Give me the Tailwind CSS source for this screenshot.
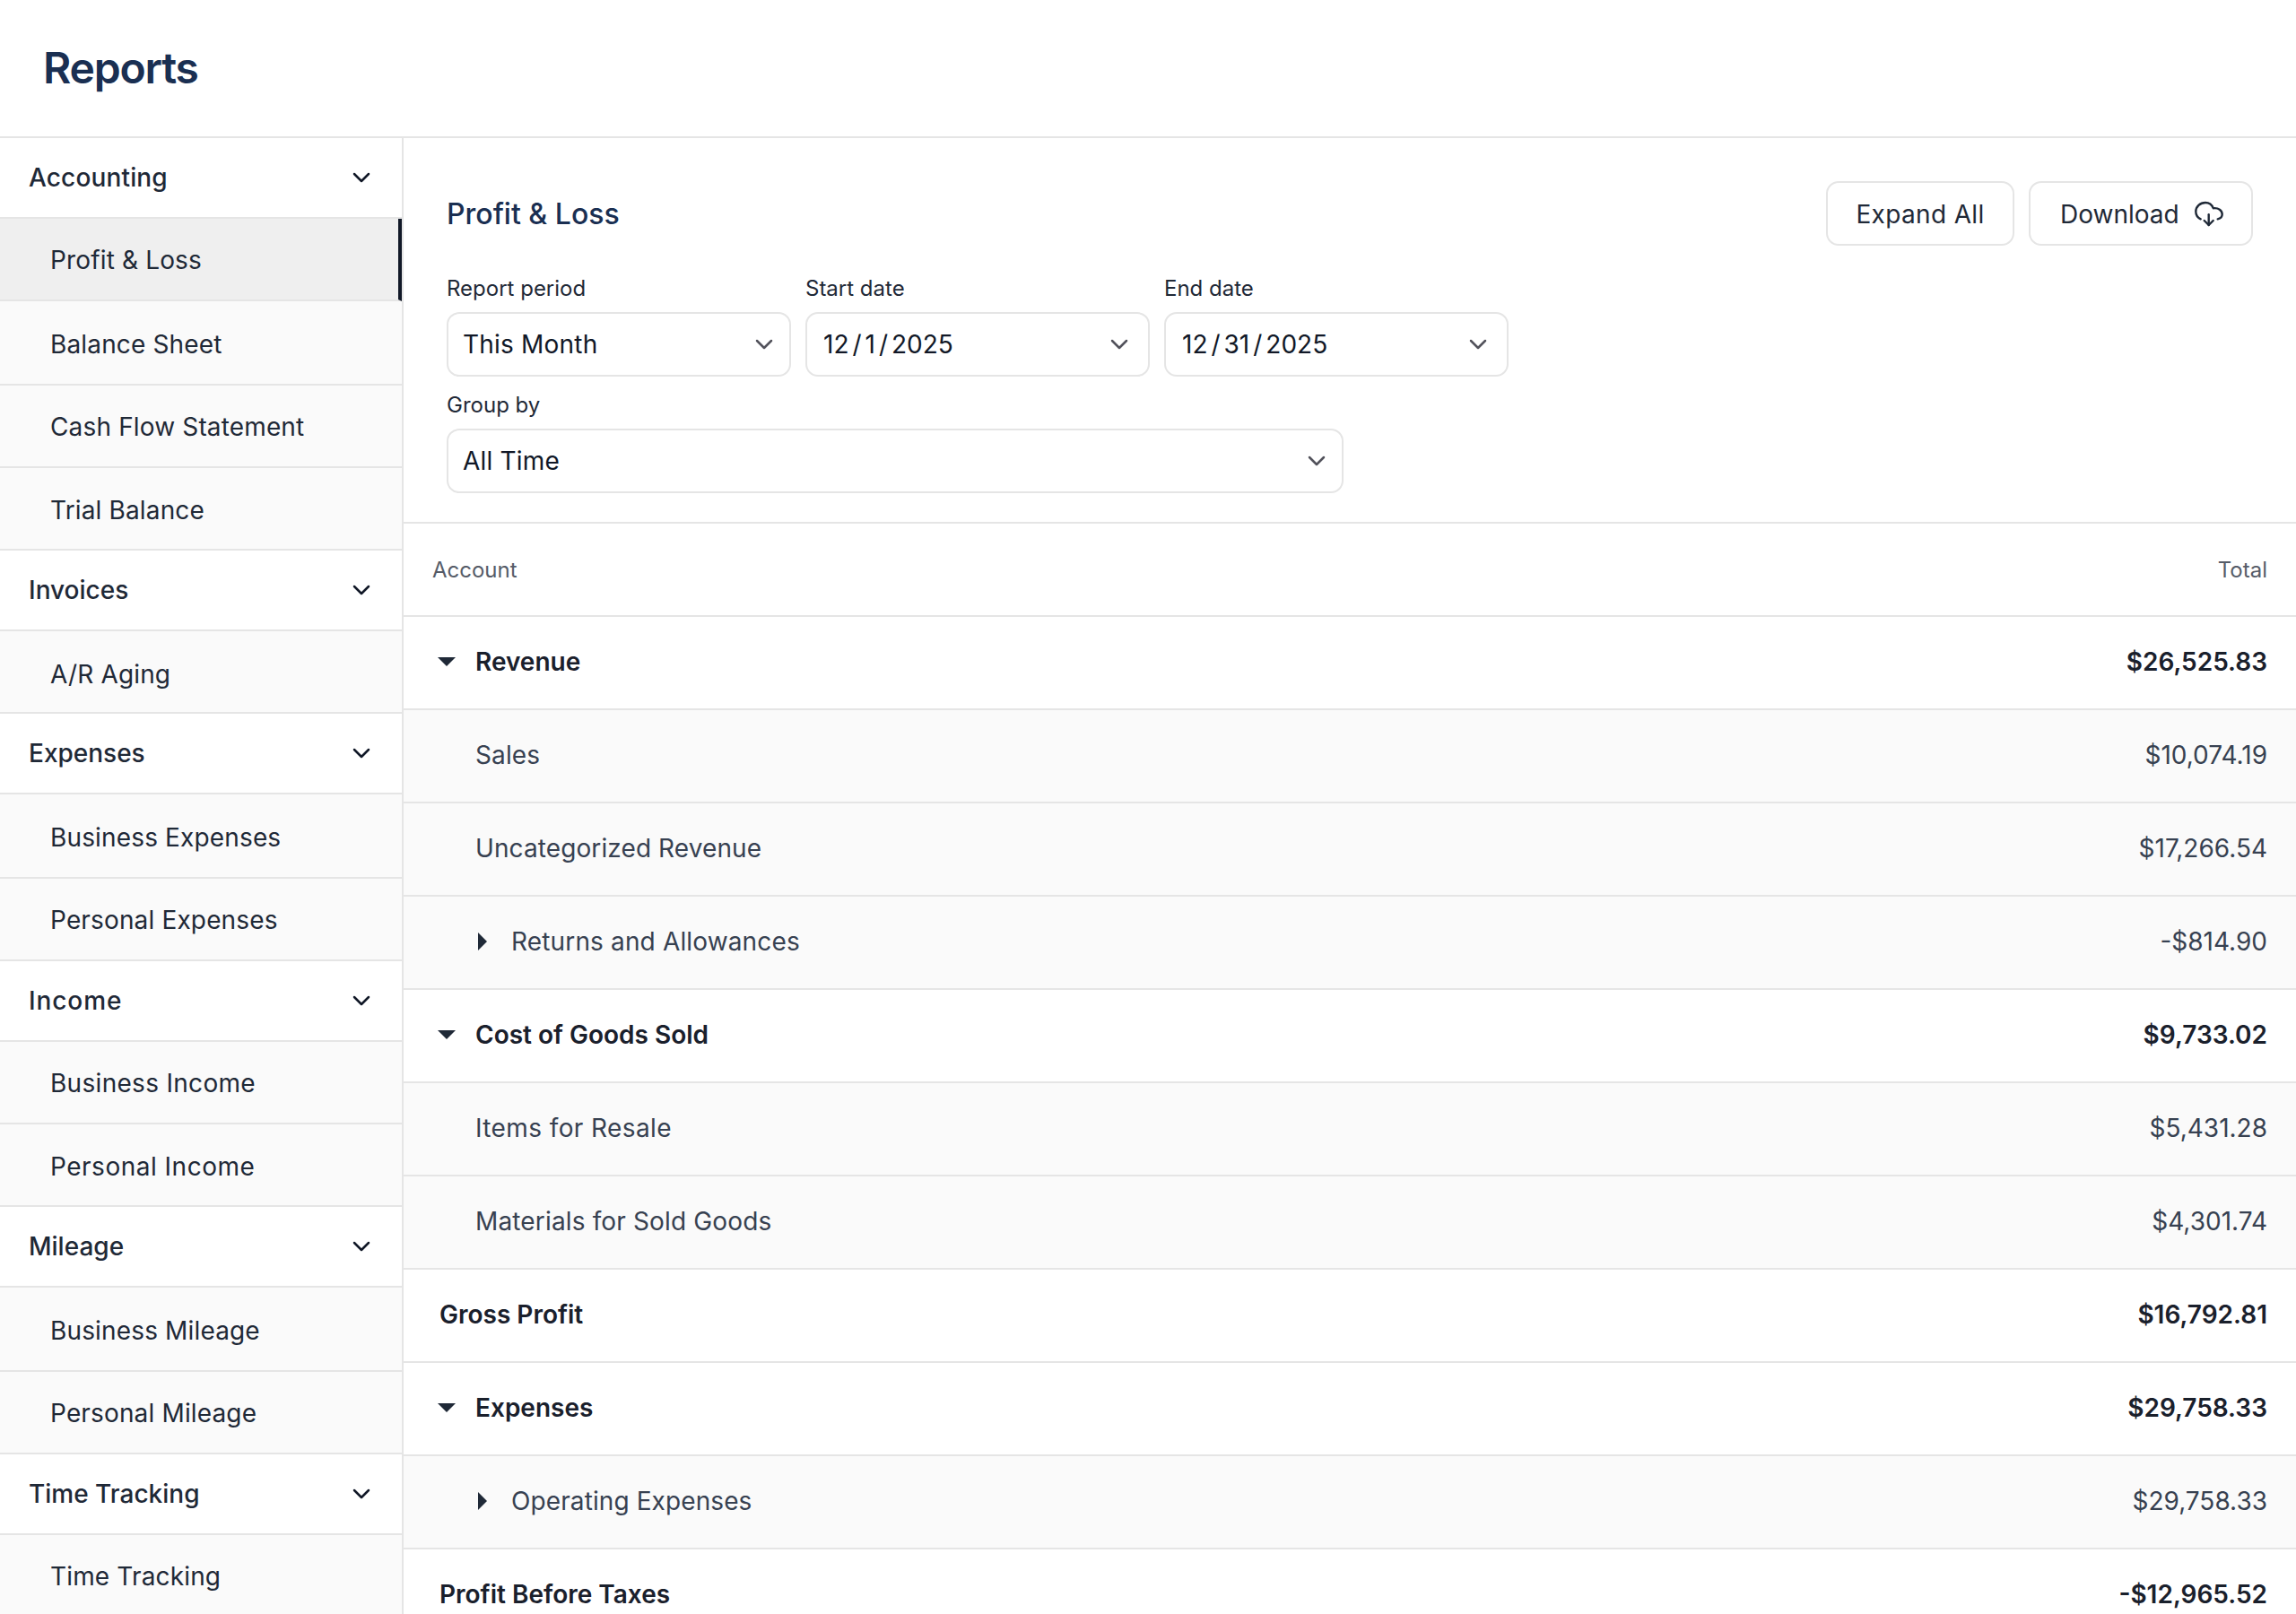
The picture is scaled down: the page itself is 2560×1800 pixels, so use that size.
<!DOCTYPE html>
<html lang="en">

<head>
    <meta charset="UTF-8">
    <meta name="viewport" content="width=device-width, initial-scale=1.0">
    <title>Reports</title>
    <script src="https://cdn.jsdelivr.net/npm/@tailwindcss/browser@4"></script>
</head>

<body class="bg-white h-[1800px] overflow-hidden font-['Inter',sans-serif] [font-optical-sizing:none] text-[#1f2937]">
    <!-- page header -->
    <header class="h-[154px] border-b-2 border-[#e5e5e5] flex items-center pl-[48px]">
        <h1 class="text-[48px] font-semibold text-[#1a2f52] [font-optical-sizing:auto] tracking-[-1.2px]">Reports</h1>
    </header>

    <div class="flex h-[1646px]">
        <!-- sidebar -->
        <nav class="w-[450px] shrink-0 border-r-2 border-[#e5e5e5] text-[28px] overflow-hidden">
            <div class="h-[90px] flex items-center justify-between pl-[32px] pr-[33px] bg-white font-medium border-b-2 border-[#e5e5e5]">
                <span class="tracking-[0.15px]">Accounting</span>
                <svg class="w-[24px] h-[24px]" viewBox="0 0 24 24" fill="none" stroke="#111827" stroke-width="2.5" stroke-linecap="round" stroke-linejoin="round"><path d="M4 8l8 8 8-8"/></svg>
            </div>
            <div class="h-[92px] flex items-center pl-[56px] pt-[2px] tracking-[0.15px] bg-[#efefef] border-b-2 border-r-4 border-[#e5e5e5] border-r-[#111827]">Profit &amp; Loss</div>
            <div class="h-[94px] flex items-center pl-[56px] pt-[4px] tracking-[0.15px] bg-[#fafafa] border-b-2 border-[#e5e5e5]">Balance Sheet</div>
            <div class="h-[92px] flex items-center pl-[56px] pt-[2px] tracking-[0.15px] bg-[#fafafa] border-b-2 border-[#e5e5e5]">Cash Flow Statement</div>
            <div class="h-[92px] flex items-center pl-[56px] pt-[4px] tracking-[0.15px] bg-[#fafafa] border-b-2 border-[#e5e5e5]">Trial Balance</div>

            <div class="h-[90px] flex items-center justify-between pl-[32px] pr-[33px] bg-white font-medium border-b-2 border-[#e5e5e5]">
                <span>Invoices</span>
                <svg class="w-[24px] h-[24px]" viewBox="0 0 24 24" fill="none" stroke="#111827" stroke-width="2.5" stroke-linecap="round" stroke-linejoin="round"><path d="M4 8l8 8 8-8"/></svg>
            </div>
            <div class="h-[92px] flex items-center pl-[56px] pt-[5px] tracking-[0.15px] bg-[#fafafa] border-b-2 border-[#e5e5e5]">A/R Aging</div>

            <div class="h-[90px] flex items-center justify-between pl-[32px] pr-[33px] bg-white font-medium border-b-2 border-[#e5e5e5]">
                <span>Expenses</span>
                <svg class="w-[24px] h-[24px]" viewBox="0 0 24 24" fill="none" stroke="#111827" stroke-width="2.5" stroke-linecap="round" stroke-linejoin="round"><path d="M4 8l8 8 8-8"/></svg>
            </div>
            <div class="h-[94px] flex items-center pl-[56px] pt-[4px] tracking-[0.15px] bg-[#fafafa] border-b-2 border-[#e5e5e5]">Business Expenses</div>
            <div class="h-[92px] flex items-center pl-[56px] pt-[2px] tracking-[0.15px] bg-[#fafafa] border-b-2 border-[#e5e5e5]">Personal Expenses</div>

            <div class="h-[90px] flex items-center justify-between pl-[32px] pr-[33px] bg-white font-medium border-b-2 border-[#e5e5e5]">
                <span class="tracking-[0.9px]">Income</span>
                <svg class="w-[24px] h-[24px]" viewBox="0 0 24 24" fill="none" stroke="#111827" stroke-width="2.5" stroke-linecap="round" stroke-linejoin="round"><path d="M4 8l8 8 8-8"/></svg>
            </div>
            <div class="h-[92px] flex items-center pl-[56px] pt-[2px] tracking-[0.3px] bg-[#fafafa] border-b-2 border-[#e5e5e5]">Business Income</div>
            <div class="h-[92px] flex items-center pl-[56px] pt-[4px] tracking-[0.5px] bg-[#fafafa] border-b-2 border-[#e5e5e5]">Personal Income</div>

            <div class="h-[90px] flex items-center justify-between pl-[32px] pr-[33px] bg-white font-medium border-b-2 border-[#e5e5e5]">
                <span>Mileage</span>
                <svg class="w-[24px] h-[24px]" viewBox="0 0 24 24" fill="none" stroke="#111827" stroke-width="2.5" stroke-linecap="round" stroke-linejoin="round"><path d="M4 8l8 8 8-8"/></svg>
            </div>
            <div class="h-[94px] flex items-center pl-[56px] pt-[3px] tracking-[0.15px] bg-[#fafafa] border-b-2 border-[#e5e5e5]">Business Mileage</div>
            <div class="h-[92px] flex items-center pl-[56px] pt-[2px] tracking-[0.15px] bg-[#fafafa] border-b-2 border-[#e5e5e5]">Personal Mileage</div>

            <div class="h-[90px] flex items-center justify-between pl-[32px] pr-[33px] bg-white font-medium border-b-2 border-[#e5e5e5]">
                <span>Time Tracking</span>
                <svg class="w-[24px] h-[24px]" viewBox="0 0 24 24" fill="none" stroke="#111827" stroke-width="2.5" stroke-linecap="round" stroke-linejoin="round"><path d="M4 8l8 8 8-8"/></svg>
            </div>
            <div class="h-[92px] flex items-center pl-[56px] pt-[2px] tracking-[0.15px] bg-[#fafafa] border-b-2 border-[#e5e5e5]">Time Tracking</div>
        </nav>

        <main class="flex-1 min-w-0">
            <!-- filters -->
            <section class="h-[430px] border-b-2 border-[#e5e5e5] px-[48px] pt-[48px]">
                <div class="flex justify-between h-[72px]">
                    <h2 class="text-[32px] font-[550] text-[#1a2f52] leading-[74px]">Profit &amp; Loss</h2>
                    <div class="flex gap-[16px]">
                        <button class="h-[72px] w-[210px] pt-[2px] border-2 border-[#e5e5e5] rounded-[14px] text-[28px] text-center tracking-[0.35px]">Expand All</button>
                        <button class="h-[72px] w-[250px] pt-[2px] border-2 border-[#e5e5e5] rounded-[14px] text-[28px] flex items-center pl-[33px] gap-[17px]">
                            Download
                            <svg class="w-[32px] h-[30px]" viewBox="0 0 32 30" fill="none" stroke="#1f2937" stroke-width="2.4" stroke-linecap="round" stroke-linejoin="round"><path d="M6.7 20.3C3 18.5 1.3 15.5 1.3 12C1.3 6.5 6 2 12 2C16 2 19.3 4.5 20.7 8.2C26.5 7.5 30.7 10.5 30.7 15C30.7 17.5 28.5 19.7 25.7 20.3"/><path d="M15.7 15.3V27"/><path d="M10.7 22L15.7 27L20.7 22"/></svg>
                        </button>
                    </div>
                </div>
                <div class="flex gap-[16px] mt-[29px]">
                    <div class="w-[384px]">
                        <div class="text-[24px] h-[38px] leading-[38px] mb-[7px]">Report period</div>
                        <div class="h-[72px] border-2 border-[#e5e5e5] rounded-[14px] flex items-center justify-between pl-[16px] pr-[18px] text-[28px] text-[#111827]">
                            <span class="tracking-[0.2px]">This Month</span>
                            <svg class="w-[20px] h-[12px]" viewBox="0 0 20 12" fill="none" stroke="#52525b" stroke-width="2.5" stroke-linecap="round" stroke-linejoin="round"><path d="M2 2l8 8 8-8"/></svg>
                        </div>
                    </div>
                    <div class="w-[384px]">
                        <div class="text-[24px] h-[38px] leading-[38px] mb-[7px]">Start date</div>
                        <div class="h-[72px] border-2 border-[#e5e5e5] rounded-[14px] flex items-center justify-between pl-[18px] pr-[22px] text-[28px] text-[#111827]">
                            <span>12<span class="mx-[4px]">/</span>1<span class="mx-[4px]">/</span>2025</span>
                            <svg class="w-[20px] h-[12px]" viewBox="0 0 20 12" fill="none" stroke="#52525b" stroke-width="2.5" stroke-linecap="round" stroke-linejoin="round"><path d="M2 2l8 8 8-8"/></svg>
                        </div>
                    </div>
                    <div class="w-[384px]">
                        <div class="text-[24px] h-[38px] leading-[38px] mb-[7px]">End date</div>
                        <div class="h-[72px] border-2 border-[#e5e5e5] rounded-[14px] flex items-center justify-between pl-[18px] pr-[22px] text-[28px] text-[#111827]">
                            <span>12<span class="mx-[4px]">/</span>31<span class="mx-[4px]">/</span>2025</span>
                            <svg class="w-[20px] h-[12px]" viewBox="0 0 20 12" fill="none" stroke="#52525b" stroke-width="2.5" stroke-linecap="round" stroke-linejoin="round"><path d="M2 2l8 8 8-8"/></svg>
                        </div>
                    </div>
                </div>
                <div class="w-[1000px] mt-[13px]">
                    <div class="text-[24px] h-[38px] leading-[38px] mb-[7px]">Group by</div>
                    <div class="h-[72px] border-2 border-[#e5e5e5] rounded-[14px] flex items-center justify-between pl-[16px] pr-[18px] text-[28px] text-[#111827]">
                        <span class="tracking-[0.2px]">All Time</span>
                        <svg class="w-[20px] h-[12px]" viewBox="0 0 20 12" fill="none" stroke="#52525b" stroke-width="2.5" stroke-linecap="round" stroke-linejoin="round"><path d="M2 2l8 8 8-8"/></svg>
                    </div>
                </div>
            </section>

            <!-- table -->
            <div class="h-[104px] flex items-center justify-between pl-[32px] pr-[32px] pt-[2px] border-b-2 border-[#e5e5e5] text-[24px] text-[#565c68]">
                <span>Account</span><span>Total</span>
            </div>

            <div class="h-[104px] flex items-center justify-between pr-[32px] pb-[2px] border-b-2 border-[#e5e5e5] text-[28px] font-[580] text-[#1a202c]">
                <span class="flex items-center pl-[38px]"><svg class="w-[20px] h-[10px] mr-[22px]" viewBox="0 0 20 10" fill="#1f2937"><path d="M0 0h20L10 10z"/></svg>Revenue</span><span>$26,525.83</span>
            </div>
            <div class="h-[104px] flex items-center justify-between pr-[32px] pl-[80px] pb-[2px] border-b-2 border-[#e5e5e5] bg-[#fafafa] text-[28px] text-[#374151]">
                <span class="tracking-[0.1px]">Sales</span><span>$10,074.19</span>
            </div>
            <div class="h-[104px] flex items-center justify-between pr-[32px] pl-[80px] pb-[2px] border-b-2 border-[#e5e5e5] bg-[#fafafa] text-[28px] text-[#374151]">
                <span class="tracking-[0.1px]">Uncategorized Revenue</span><span>$17,266.54</span>
            </div>
            <div class="h-[104px] flex items-center justify-between pr-[32px] pb-[2px] border-b-2 border-[#e5e5e5] bg-[#fafafa] text-[28px] text-[#374151]">
                <span class="flex items-center pl-[83px] tracking-[0.15px]"><svg class="w-[10px] h-[20px] mr-[27px]" viewBox="0 0 10 20" fill="#1f2937"><path d="M0 0l10 10L0 20z"/></svg>Returns and Allowances</span><span>-$814.90</span>
            </div>

            <div class="h-[104px] flex items-center justify-between pr-[32px] pb-[2px] border-b-2 border-[#e5e5e5] text-[28px] font-[580] text-[#1a202c]">
                <span class="flex items-center pl-[38px]"><svg class="w-[20px] h-[10px] mr-[22px]" viewBox="0 0 20 10" fill="#1f2937"><path d="M0 0h20L10 10z"/></svg>Cost of Goods Sold</span><span>$9,733.02</span>
            </div>
            <div class="h-[104px] flex items-center justify-between pr-[32px] pl-[80px] pb-[2px] border-b-2 border-[#e5e5e5] bg-[#fafafa] text-[28px] text-[#374151]">
                <span class="tracking-[0.4px]">Items for Resale</span><span>$5,431.28</span>
            </div>
            <div class="h-[104px] flex items-center justify-between pr-[32px] pl-[80px] pb-[2px] border-b-2 border-[#e5e5e5] bg-[#fafafa] text-[28px] text-[#374151]">
                <span class="tracking-[0.15px]">Materials for Sold Goods</span><span>$4,301.74</span>
            </div>
            <div class="h-[104px] flex items-center justify-between pr-[32px] pl-[40px] pb-[2px] border-b-2 border-[#e5e5e5] text-[28px] font-[580] text-[#1a202c]">
                <span>Gross Profit</span><span>$16,792.81</span>
            </div>

            <div class="h-[104px] flex items-center justify-between pr-[32px] pb-[2px] border-b-2 border-[#e5e5e5] text-[28px] font-[580] text-[#1a202c]">
                <span class="flex items-center pl-[38px]"><svg class="w-[20px] h-[10px] mr-[22px]" viewBox="0 0 20 10" fill="#1f2937"><path d="M0 0h20L10 10z"/></svg>Expenses</span><span>$29,758.33</span>
            </div>
            <div class="h-[104px] flex items-center justify-between pr-[32px] pb-[2px] border-b-2 border-[#e5e5e5] bg-[#fafafa] text-[28px] text-[#374151]">
                <span class="flex items-center pl-[83px] tracking-[0.1px]"><svg class="w-[10px] h-[20px] mr-[27px]" viewBox="0 0 10 20" fill="#1f2937"><path d="M0 0l10 10L0 20z"/></svg>Operating Expenses</span><span>$29,758.33</span>
            </div>
            <div class="h-[104px] flex items-center justify-between pr-[32px] pl-[40px] pb-[2px] border-b-2 border-[#e5e5e5] text-[28px] font-[580] text-[#1a202c]">
                <span>Profit Before Taxes</span><span>-$12,965.52</span>
            </div>
        </main>
    </div>
</body>

</html>
